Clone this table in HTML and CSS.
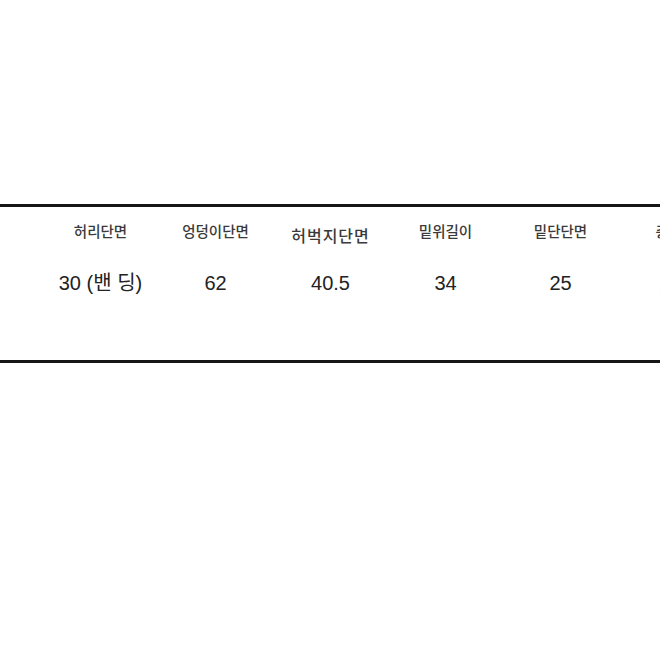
FILE: index.html
```html
<!DOCTYPE html>
<html lang="ko">
<head>
<meta charset="utf-8">
<link rel="stylesheet" href="styles.css">
</head>
<body>
<div class="page">
  <div class="sheet">
    <div class="grid">
      <div class="cell head">허리단면</div>
      <div class="cell head">엉덩이단면</div>
      <div class="cell head wide">허벅지단면</div>
      <div class="cell head">밑위길이</div>
      <div class="cell head">밑단단면</div>
      <div class="cell head">총기장</div>
      <div class="cell val">30 (밴 딩)</div>
      <div class="cell val">62</div>
      <div class="cell val">40.5</div>
      <div class="cell val">34</div>
      <div class="cell val">25</div>
      <div class="cell val">100</div>
    </div>
  </div>
</div>
</body>
</html>
```

FILE: styles.css
```css
html, body {
  margin: 0;
  padding: 0;
  background: #ffffff;
}
body {
  width: 660px;
  height: 660px;
  overflow: hidden;
  font-family: "Liberation Sans", "Noto Sans CJK KR", sans-serif;
}
.page {
  padding-top: 204px;
}
.sheet {
  width: 760px;
  border-top: 3px solid #161616;
  border-bottom: 3px solid #161616;
  height: 153px;
  box-sizing: content-box;
}
.grid {
  display: grid;
  grid-template-columns: repeat(6, 115px);
  grid-template-rows: 47px 40px;
  padding-left: 43px;
  padding-top: 7px;
}
.cell {
  text-align: center;
  white-space: nowrap;
}
.head {
  font-size: 14.5px;
  font-weight: 500;
  color: #3a3a3a;
  line-height: 34px;
  font-family: "Noto Sans CJK KR", "Liberation Sans", sans-serif;
}
.head.wide {
  font-size: 16px;
  letter-spacing: 1px;
  padding-top: 4px;
  line-height: 34px;
}
.val {
  font-size: 20px;
  color: #222222;
  line-height: 40px;
  padding-top: 2px;
}
```
